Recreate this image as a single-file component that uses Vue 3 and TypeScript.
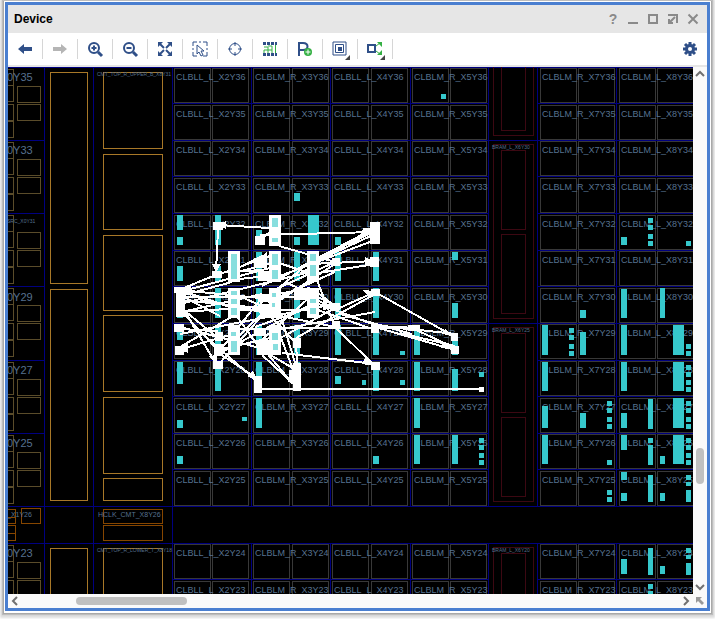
<script setup lang="ts">
type Box = [number, number, number, number]

const tools = ['Back', 'Forward', 'Zoom in', 'Zoom out', 'Zoom fit', 'Select area', 'Auto-fit selection', 'Routing resources', 'Add pblock', 'Cell drawing', 'Show connections']

const columns = [
  { name: 'CLBLL_L_X2', x: 174, edge: 172, second: 38 },
  { name: 'CLBLM_R_X3', x: 253, edge: 251, second: 39 },
  { name: 'CLBLL_L_X4', x: 332, edge: 330, second: 39 },
  { name: 'CLBLM_R_X5', x: 412, edge: 410, second: 38 },
  { name: 'CLBLM_R_X7', x: 540, edge: 537, second: 38 },
  { name: 'CLBLM_L_X8', x: 619, edge: 616, second: 38 }
]
const rows: [number, number][] = [
  [36, 68], [35, 105], [34, 141], [33, 178], [32, 215], [31, 251], [30, 288],
  [29, 324], [28, 361], [27, 398], [26, 434], [25, 471], [24, 544], [23, 581]
]
const tiles = columns.flatMap(c => rows.map(([n, y]) => ({ label: `${c.name}Y${n}`, x: c.x, x2: c.x + c.second, y })))

const rowLines = [67, 103, 140, 176, 213, 250, 286, 323, 360, 396, 433, 469, 506, 543, 579]
const ioLines = [140, 213, 286, 360, 433]
const ioGroups = [67, 140, 213, 286, 360, 433, 543]
const ioLabels: [string, number][] = [['0Y35', 81], ['0Y33', 154], ['0Y29', 301], ['0Y27', 374], ['0Y25', 447], ['0Y23', 557]]

const clockBoxes: Box[] = [
  [50, 72, 37, 211], [50, 289, 37, 211], [50, 548, 37, 60],
  [103, 72, 59, 76], [103, 154, 59, 75], [103, 235, 59, 75], [103, 315, 59, 76],
  [103, 397, 59, 76], [103, 478, 59, 22], [103, 548, 59, 60]
]
const hclkBoxes: Box[] = [
  [0, 509, 15, 8], [0, 517, 15, 6], [0, 525, 15, 8], [0, 533, 15, 7],
  [21, 508, 19, 15], [103, 509, 59, 14], [103, 525, 59, 15]
]
const bramBoxes: Box[] = [
  [493, 40, 40, 95], [501, 40, 24, 90],
  [493, 144, 40, 174], [501, 150, 24, 79], [501, 234, 24, 79],
  [493, 327, 40, 174], [501, 333, 24, 79], [501, 417, 24, 79],
  [493, 547, 40, 90], [501, 553, 24, 79]
]
const dots = (x: number, ys: number[]): Box[] => ys.map(y => [x, y, 5, 5])
const cells: Box[] = [
  [441, 94, 5, 5], [294, 193, 6, 8],
  [177, 215, 6, 15], [177, 237, 6, 8], [215, 215, 6, 30], [256, 230, 6, 14], [294, 237, 6, 8], [308, 215, 11, 30], [335, 237, 6, 8],
  [177, 266, 6, 15], [215, 266, 6, 15], [256, 252, 6, 29], [294, 252, 6, 29], [335, 252, 6, 29], [373, 252, 6, 29], [452, 252, 6, 8],
  [177, 288, 6, 30], [215, 288, 6, 30], [256, 288, 6, 30], [294, 288, 6, 30], [335, 288, 6, 30], [373, 288, 6, 30], [452, 303, 6, 15],
  [177, 325, 6, 15], [215, 325, 6, 30], [256, 325, 6, 30], [294, 325, 6, 30], [335, 325, 6, 30], [373, 325, 6, 30], [400, 351, 5, 4], [414, 325, 6, 30], [452, 340, 6, 15],
  [177, 362, 6, 22], [215, 362, 6, 29], [256, 362, 6, 29], [294, 362, 6, 29], [335, 376, 6, 8], [362, 380, 4, 5], [373, 362, 6, 29], [400, 380, 5, 5],
  [414, 362, 6, 29], [452, 369, 6, 22], [479, 372, 5, 5],
  [177, 420, 6, 8], [242, 417, 5, 4], [256, 398, 6, 30], [414, 398, 6, 30],
  [177, 456, 6, 8], [373, 456, 6, 8], [414, 435, 6, 29], [452, 435, 6, 29], ...dots(479, [438, 445, 453, 460]),
  [621, 237, 6, 8], ...dots(648, [218, 225, 234, 241]), [686, 241, 5, 5],
  [621, 289, 6, 29], [660, 288, 5, 30], [580, 310, 6, 8],
  [542, 325, 6, 30], ...dots(569, [328, 335, 344, 351]), [580, 332, 6, 23], [621, 325, 6, 30], [673, 325, 11, 30], ...dots(686, [344, 351]),
  [542, 362, 6, 29], [621, 362, 6, 29], [673, 362, 11, 29], ...dots(686, [365, 372, 380, 387]),
  [542, 406, 6, 22], [580, 413, 6, 15], ...dots(607, [401, 408, 417, 424]), [621, 413, 6, 15], [648, 399, 5, 30], [673, 398, 11, 30], ...dots(686, [401, 408, 417, 424]),
  [542, 435, 6, 29], [607, 460, 5, 5], [621, 435, 6, 15], [648, 438, 5, 5], [648, 445, 5, 20], [660, 456, 5, 8], [673, 435, 11, 29], ...dots(686, [438, 445, 453, 460]),
  ...dots(607, [490, 497]), [621, 472, 6, 8], [621, 493, 6, 8], [648, 475, 5, 27], [660, 493, 5, 8], [686, 475, 5, 5], [686, 482, 5, 4], [686, 490, 5, 12],
  [621, 559, 6, 15], [648, 548, 5, 27], [660, 566, 5, 8], [686, 548, 5, 5], [686, 555, 5, 4], [686, 563, 5, 12],
  [648, 584, 5, 5], [648, 591, 5, 5]
]
const selected: Box[] = [
  [269, 215, 12, 31], [228, 251, 12, 31], [269, 251, 12, 31], [307, 251, 12, 31],
  [228, 288, 12, 30], [269, 288, 12, 30], [307, 288, 12, 30], [228, 325, 12, 30], [269, 325, 12, 30]
]
const glow: Box[] = [
  [272, 218, 6, 9], [272, 238, 6, 4], [231, 254, 6, 25], [272, 254, 6, 11], [272, 270, 6, 9], [310, 254, 6, 7], [310, 265, 6, 11],
  [231, 291, 6, 4], [231, 299, 6, 5], [231, 308, 6, 7], [272, 293, 4, 4], [272, 303, 3, 4], [310, 299, 6, 4], [310, 308, 6, 6],
  [231, 341, 6, 11], [231, 332, 5, 4], [272, 333, 6, 7], [273, 344, 5, 6]
]
const pads: Box[] = [
  [213, 222, 10, 8], [212, 271, 10, 7], [255, 236, 10, 9], [370, 222, 10, 22], [370, 257, 9, 10],
  [174, 287, 12, 6], [176, 291, 9, 26], [174, 324, 10, 8], [175, 346, 9, 9],
  [254, 258, 13, 10], [258, 271, 11, 10], [258, 294, 12, 8], [260, 304, 10, 14], [294, 288, 13, 12],
  [215, 332, 8, 9], [214, 344, 9, 12], [213, 361, 10, 8], [254, 328, 12, 8], [257, 340, 12, 15],
  [293, 338, 8, 10], [293, 363, 8, 28], [289, 370, 12, 10], [254, 376, 8, 17], [332, 258, 8, 8],
  [331, 303, 9, 7], [332, 321, 8, 8], [371, 289, 9, 7], [371, 324, 8, 9], [408, 325, 12, 6],
  [451, 333, 7, 8], [451, 346, 8, 8], [371, 362, 9, 8], [479, 387, 5, 5]
]
const nets: Box[] = [
  [218, 225, 270, 228], [218, 229, 216, 272], [260, 235, 375, 232], [279, 246, 335, 262], [262, 238, 270, 232],
  [217, 275, 270, 256], [179, 290, 218, 274], [179, 292, 270, 268], [180, 296, 232, 282], [180, 304, 310, 272],
  [216, 273, 262, 270], [234, 270, 262, 256], [238, 272, 275, 262], [232, 280, 265, 276],
  [262, 286, 375, 231], [276, 280, 375, 228], [280, 276, 375, 240], [310, 264, 375, 234], [300, 274, 375, 226],
  [270, 292, 335, 262], [310, 264, 375, 261], [318, 273, 375, 264], [276, 262, 312, 274],
  [180, 290, 270, 299], [180, 297, 310, 297], [180, 300, 270, 309], [182, 312, 262, 294], [182, 296, 220, 316],
  [180, 312, 275, 306], [179, 290, 233, 308], [200, 300, 262, 312], [235, 294, 275, 312],
  [180, 307, 218, 338], [182, 306, 216, 364], [184, 314, 218, 350], [178, 350, 233, 334], [180, 347, 240, 312],
  [179, 329, 218, 331], [180, 334, 335, 304], [180, 327, 260, 348], [192, 325, 258, 382],
  [218, 365, 276, 300], [218, 353, 260, 300], [218, 350, 270, 338], [218, 354, 310, 305], [220, 354, 258, 379],
  [235, 340, 278, 298], [238, 318, 258, 346], [256, 345, 310, 297], [262, 348, 335, 308],
  [234, 329, 335, 328], [335, 328, 414, 328], [262, 355, 296, 386], [262, 350, 296, 370], [278, 330, 297, 380],
  [272, 318, 298, 345], [266, 352, 288, 378], [282, 320, 296, 366], [296, 342, 298, 380], [276, 330, 375, 312],
  [282, 353, 375, 364], [258, 389, 481, 389], [276, 315, 335, 327], [335, 327, 375, 366], [296, 338, 375, 294],
  [310, 262, 335, 327], [300, 290, 335, 310], [285, 282, 335, 305], [318, 293, 335, 306], [316, 303, 375, 325],
  [318, 310, 375, 330], [375, 292, 455, 337], [335, 310, 375, 292], [375, 325, 455, 334], [375, 327, 455, 350],
  [340, 314, 412, 334], [400, 333, 455, 346], [412, 328, 455, 348], [234, 310, 310, 310], [268, 302, 335, 272],
  [280, 300, 335, 264], [260, 304, 312, 260], [258, 298, 310, 288], [255, 327, 300, 311]
]
const arrows = [
  'M218 225l8-4v8z', 'M216 272l-4-8h9z', 'M375 228l-13 0 9 7z', 'M375 226l-14 4 8 5z', 'M375 262l-10-5v9z',
  'M375 291l-12-1 6 7z', 'M455 337l-10-8-2 5z', 'M455 350l-12-8-2 6z', 'M375 366l-10-8-3 6z',
  'M218 366l-9-10 8-1z', 'M258 382l-11-6 6-5z', 'M296 386l-9-5 5-5z', 'M256 240l9-6v10z', 'M254 262l13-10v14z',
  'M335 308l-12-7v9z', 'M179 290l12-6v12z', 'M179 350l9-7v10z', 'M407 326l-12 0 12 5z'
]
</script>

<template>
  <main class="window">
    <header class="titlebar">
      <h1>Device</h1>
      <div class="window-actions">
        <button type="button" class="help" aria-label="Help">?</button>
        <button type="button" aria-label="Minimize"><svg viewBox="0 0 12 12"><path d="M1 10h10" /></svg></button>
        <button type="button" aria-label="Maximize"><svg viewBox="0 0 12 12"><path d="M2 2h8v8H2z" /></svg></button>
        <button type="button" aria-label="Float"><svg viewBox="0 0 12 12"><path d="M1 2h9v8M8 4L3 9M2 6v4h4" /></svg></button>
        <button type="button" aria-label="Close"><svg viewBox="0 0 12 12"><path d="M1.500 1.500l9 9M10.500 1.500l-9 9" /></svg></button>
      </div>
    </header>

    <nav class="toolbar" aria-label="Device tools">
      <button v-for="(tool, i) in tools" :key="tool" type="button" class="tool" :aria-label="tool">
        <svg viewBox="0 0 20 20">
          <g v-if="i === 0"><path class="ink" d="M3 10l6-5v3h8v4H9v3z" /></g>
          <g v-else-if="i === 1"><path class="muted" d="M17 10l-6-5v3H3v4h8v3z" /></g>
          <g v-else-if="i === 2 || i === 3" class="line">
            <circle cx="9" cy="9" r="5" /><path d="M13 13l4 4" class="thick" /><path d="M6.500 9h5" /><path v-if="i === 2" d="M9 6.500v5" />
          </g>
          <g v-else-if="i === 4">
            <path class="line" d="M5 5l4 4M15 5l-4 4M5 15l4-4M15 15l-4-4" />
            <path class="ink" d="M3 3h5l-5 5zM17 3h-5l5 5zM3 17h5l-5-5zM17 17h-5l5-5z" />
          </g>
          <g v-else-if="i === 5" class="line thin">
            <path d="M3 7V3h4M13 3h4v4M17 13v4h-4M7 17H3v-4M9 3h2M3 9v2M17 9v2" /><path d="M7 6v9l2-2 2 4 2-1-2-4h3z" />
          </g>
          <g v-else-if="i === 6" class="line thin"><circle cx="10" cy="10" r="5.500" /><path d="M10 3v4M10 13v4M3 10h4M13 10h4" /></g>
          <g v-else-if="i === 7">
            <path class="ink" d="M3 3h3v3H3zM7 3h3v3H7zM11 3h3v3h-3zM15 3h2v3h-2zM3 14h3v3H3zM7 14h3v3H7zM11 14h3v3h-3zM15 14h2v3h-2z" />
            <path class="green-line" d="M4 8h4v3H4v3M8 7h4v7M8 11h4M15.500 6v8M8 11v3" />
          </g>
          <g v-else-if="i === 8">
            <path class="line thick" d="M4 17V4h4c6 0 6 7 0 7H4" />
            <circle class="green" cx="13" cy="13" r="4" /><path class="plus" d="M10.500 13h5M13 10.500v5" />
          </g>
          <g v-else-if="i === 9"><path class="line thin" d="M3 3h13v13H3zM5.500 5.500h8v8h-8z" /><path class="ink" d="M8 8h4v4H8z" /></g>
          <g v-else>
            <path class="line" d="M3 6h7v7H3z" /><path class="green-line" d="M11 7l4-3M11 12l4 3" /><path class="green" d="M12 3h5v5zM12 16h5v-5z" />
          </g>
        </svg>
        <span v-if="i > 8" class="corner"></span>
      </button>
      <button type="button" class="settings" aria-label="Settings">
        <svg viewBox="0 0 16 16">
          <path class="gear" d="M8 1v14M1 8h14M3 3l10 10M13 3L3 13" /><circle class="ink" cx="8" cy="8" r="5" /><circle class="hole" cx="8" cy="8" r="2" />
        </svg>
      </button>
    </nav>

    <section class="viewport">
      <svg class="device" viewBox="8 67 685 527" role="img" aria-label="Device floorplan">
        <rect x="8" y="67" width="685" height="527" />
        <g class="grid">
          <path v-for="y in rowLines" :key="y" :d="`M172 ${y + 0.5}H488M537 ${y + 0.5}H693`" />
          <path v-for="y in ioLines" :key="y" :d="`M8 ${y + 0.5}H44`" />
          <path d="M8 67.500H693M8 506.500H693M8 543.500H693M488 140.500H537M488 323.500H537M44.500 67V594M93.500 67V594M172.500 67V594M488.500 67V506M488.500 543V594" />
          <path v-for="c in columns" :key="c.edge" :d="`M${c.edge + 0.5} 67V506M${c.edge + 0.5} 543V594`" />
        </g>
        <g class="io">
          <template v-for="y in ioGroups" :key="y">
            <path :d="`M0 ${y + 2.5}H13.500v16H0M0 ${y + 18.5}H13.500v16H0M0 ${y + 37.5}H13.500v16H0M0 ${y + 54.5}H13.500v16H0`" />
            <path :d="`M17.500 ${y + 19.5}h23v16h-23zM17.500 ${y + 37.5}h23v16h-23z`" />
          </template>
        </g>
        <g class="clock"><rect v-for="(b, i) in clockBoxes" :key="i" :x="b[0] + 0.5" :y="b[1] + 0.5" :width="b[2]" :height="b[3]" /></g>
        <g class="hclk"><rect v-for="(b, i) in hclkBoxes" :key="i" :x="b[0] + 0.5" :y="b[1] + 0.5" :width="b[2]" :height="b[3]" /></g>
        <g class="bram"><rect v-for="(b, i) in bramBoxes" :key="i" :x="b[0] + 0.5" :y="b[1] + 0.5" :width="b[2]" :height="b[3]" /></g>
        <g class="slices">
          <template v-for="t in tiles" :key="t.label">
            <rect :x="t.x + 0.5" :y="t.y + 0.5" width="36" height="34" />
            <rect :x="t.x2 + 0.5" :y="t.y + 0.5" width="36" height="34" />
          </template>
        </g>
        <g class="labels">
          <text v-for="t in tiles" :key="t.label" :x="t.x + 2" :y="t.y + 12">{{ t.label }}</text>
          <text v-for="l in ioLabels" :key="l[0]" class="large" x="7" :y="l[1]">{{ l[0] }}</text>
          <text class="small" x="7" y="223">SRC_X0Y31</text>
          <text class="medium" x="7" y="517">_X1Y26</text>
          <text class="medium" x="98" y="517">HCLK_CMT_X8Y26</text>
          <text class="small" x="97" y="76">CMT_TOP_R_UPPER_B_X8Y31</text>
          <text class="small" x="97" y="552">CMT_TOP_R_LOWER_T_X8Y18</text>
          <text class="small" x="492" y="149">BRAM_L_X6Y30</text>
          <text class="small" x="492" y="332">BRAM_L_X6Y25</text>
          <text class="small" x="492" y="552">BRAM_L_X6Y20</text>
        </g>
        <g class="cells"><rect v-for="(b, i) in cells" :key="i" :x="b[0]" :y="b[1]" :width="b[2]" :height="b[3]" /></g>
        <g class="nets">
          <rect v-for="(b, i) in selected" :key="'s' + i" :x="b[0]" :y="b[1]" :width="b[2]" :height="b[3]" />
          <rect v-for="(b, i) in pads" :key="'p' + i" :x="b[0]" :y="b[1]" :width="b[2]" :height="b[3]" />
          <line v-for="(n, i) in nets" :key="'n' + i" :x1="n[0]" :y1="n[1]" :x2="n[2]" :y2="n[3]" />
          <path v-for="a in arrows" :key="a" :d="a" />
        </g>
        <g class="glow"><rect v-for="(b, i) in glow" :key="i" :x="b[0]" :y="b[1]" :width="b[2]" :height="b[3]" /></g>
      </svg>
      <div class="scroll vertical">
        <button type="button" aria-label="Scroll up"><svg viewBox="0 0 12 12"><path d="M2 8l4-4 4 4" /></svg></button>
        <div class="track"><span class="before"></span><span class="thumb"></span><span class="after"></span></div>
        <button type="button" aria-label="Scroll down"><svg viewBox="0 0 12 12"><path d="M2 4l4 4 4-4" /></svg></button>
      </div>
      <div class="scroll horizontal">
        <button type="button" aria-label="Scroll left"><svg viewBox="0 0 12 12"><path d="M8 2L4 6l4 4" /></svg></button>
        <div class="track"><span class="before"></span><span class="thumb"></span><span class="after"></span></div>
        <button type="button" aria-label="Scroll right"><svg viewBox="0 0 12 12"><path d="M4 2l4 4-4 4" /></svg></button>
      </div>
      <button type="button" class="overview" aria-label="World view"><svg viewBox="0 0 10 10"><path d="M1 1h6L5 3l4 4-2 2-4-4-2 2z" /></svg></button>
    </section>
  </main>
</template>

<style>
body { background: #fff; }
</style>

<style scoped>
.window {
  margin: 2px 5px 8px;
  border: 3px solid #4a7fd0;
  box-shadow: 0 0 0 1px #fff, 0 1px 0 1px #fff, 0 1px 0 2px #a9a9a9, 0 1px 1px 3px #bdbdbd, 0 2px 2px 5px #dedede;
  font-family: "Liberation Sans", Arial, sans-serif;
}
button { padding: 0; border: 0; background: none; display: grid; place-items: center; }
.titlebar { display: flex; align-items: center; justify-content: space-between; height: 28px; padding: 0 8px 0 6px; background: #e6e6e6; }
h1 { margin: 0; font-size: 12px; line-height: 28px; color: #000; }
.window-actions { display: flex; gap: 8px; }
.window-actions button { width: 12px; height: 12px; }
.window-actions svg { width: 12px; height: 12px; fill: none; stroke: #8a8a8a; stroke-width: 2; }
.window-actions .help { font: bold 14px/12px "Liberation Sans", sans-serif; color: #8a8a8a; }
.toolbar { display: flex; align-items: center; height: 32px; background: #fff; border-bottom: 2px solid #e6e6e6; }
.tool { position: relative; width: 35px; height: 20px; border-right: 1px solid #d6d6d6; }
.tool svg { width: 20px; height: 20px; }
.corner { position: absolute; right: 7px; bottom: -1px; border-left: 5px solid transparent; border-bottom: 5px solid #444; }
.settings { margin-left: auto; margin-right: 9px; }
.settings svg { width: 16px; height: 16px; }
.ink { fill: #2f4f88; }
.muted { fill: #b5b5b5; }
.line { fill: none; stroke: #2f4f88; stroke-width: 2; }
.line .thick, .line.thick { stroke-width: 3; }
.line.thick { stroke-width: 2; }
.thin { stroke-width: 1; }
.green { fill: #35b044; }
.green-line { fill: none; stroke: #35b044; stroke-width: 1; }
.plus { stroke: #fff; stroke-width: 1; }
.gear { stroke: #2f4f88; stroke-width: 3; }
.hole { fill: #fff; }
.viewport { display: grid; grid-template-columns: 1fr 14px; grid-template-rows: auto 14px; background: #fafafa; }
.device { display: block; width: 100%; height: auto; overflow: hidden; }
.grid, .io, .clock, .hclk, .bram, .slices { fill: none; stroke-width: 1; shape-rendering: crispEdges; }
.grid { stroke: #000080; }
.io { stroke: #5a4c2a; }
.clock { stroke: #a87828; }
.hclk { stroke: #864600; }
.bram { stroke: #3c0812; }
.slices { stroke: #383838; }
.labels { fill: #56718f; font-size: 9px; }
.labels .large { font-size: 11px; }
.labels .medium { font-size: 7px; }
.labels .small { font-size: 5px; }
.cells { fill: #36c8cc; shape-rendering: crispEdges; }
.nets { fill: #fff; stroke: none; shape-rendering: crispEdges; }
.nets line { stroke: #fff; stroke-width: 2; }
.glow { fill: #88dede; shape-rendering: crispEdges; }
.scroll { display: flex; background: #fafafa; }
.scroll button { flex: none; width: 14px; height: 14px; }
.scroll svg { width: 12px; height: 12px; fill: none; stroke: #707070; stroke-width: 2; }
.vertical { flex-direction: column; }
.track { display: flex; flex: 1; align-items: center; }
.vertical .track { flex-direction: column; }
.thumb { background: #c0c0c0; border-radius: 4px; }
.vertical .thumb { width: 8px; flex: 36; }
.vertical .before { flex: 367; }
.vertical .after { flex: 96; }
.horizontal .thumb { height: 8px; flex: 111; }
.horizontal .before { flex: 54; }
.horizontal .after { flex: 492; }
.overview svg { width: 10px; height: 10px; fill: #999; }
</style>
